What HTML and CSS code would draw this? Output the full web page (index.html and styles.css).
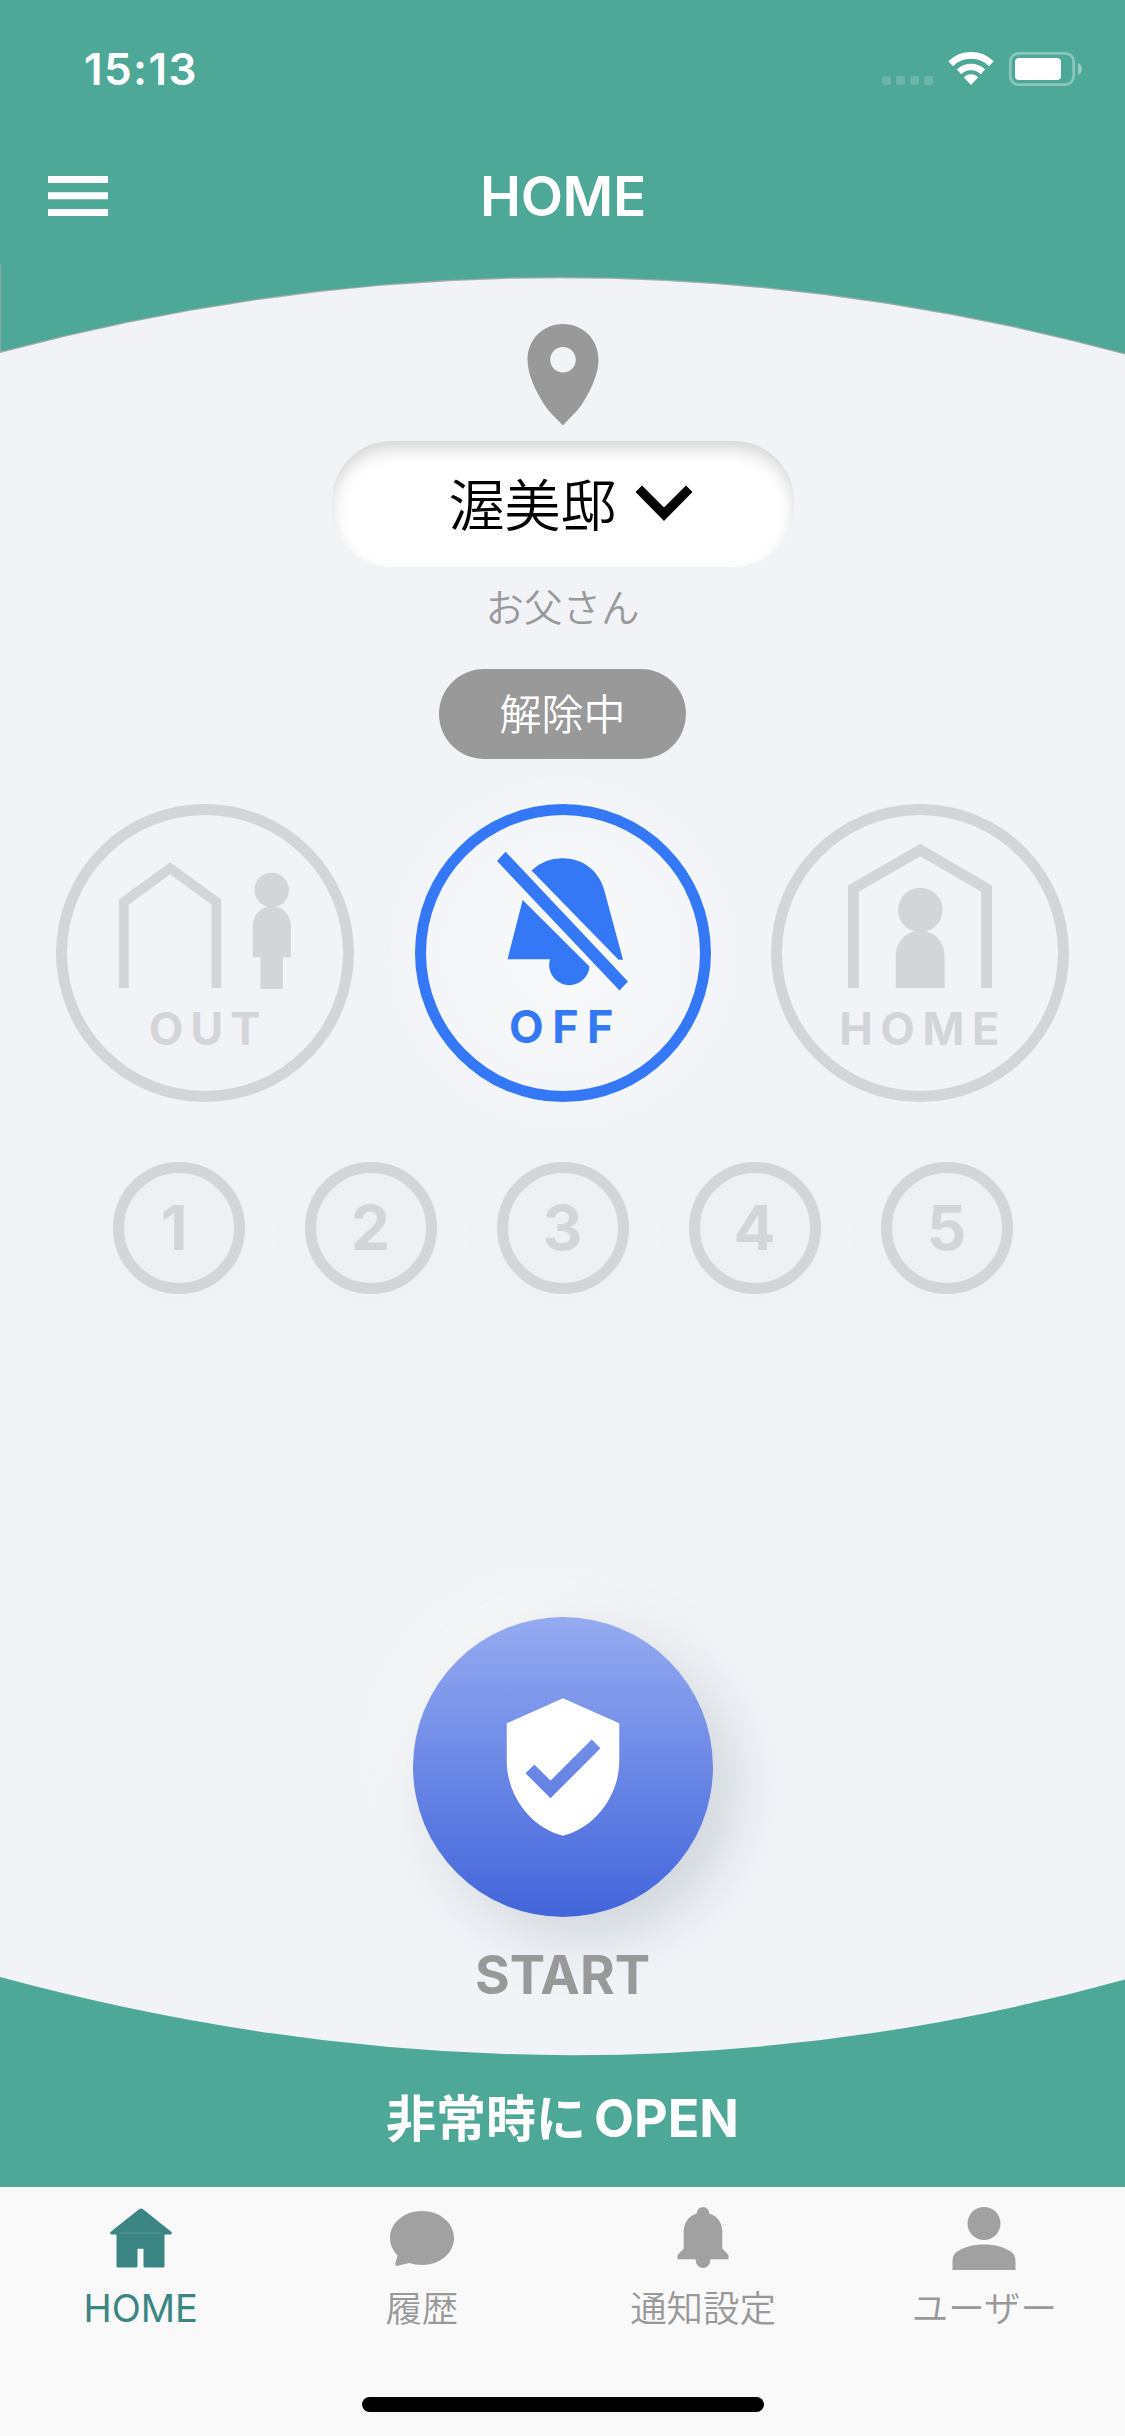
FILE: index.html
```html
<!DOCTYPE html>
<html lang="ja">
<head>
<meta charset="utf-8">
<title>HOME</title>
<link rel="stylesheet" href="styles.css">
</head>
<body>
<div class="screen">
  <header class="header">
    <div class="status">
      <span class="status-time">15:13</span>
      <svg class="status-icons" width="202" height="36" viewBox="881 51 202 36" fill="#fff">
        <g opacity=".17"><rect x="882" y="76" width="9" height="9" rx="2.5"/><rect x="896" y="76" width="9" height="9" rx="2.5"/><rect x="910" y="76" width="9" height="9" rx="2.5"/><rect x="924" y="76" width="9" height="9" rx="2.5"/></g>
        <path d="M971 85l-6.600-7q-.5-.8.3-1.400a10 10 0 0 1 12.600 0q.8.600.3 1.400z"/>
        <path d="M959 71.800a17.500 17.500 0 0 1 24 0" fill="none" stroke="#fff" stroke-width="6.400"/>
        <path d="M950.700 63.700a29 29 0 0 1 40.600 0" fill="none" stroke="#fff" stroke-width="6.800"/>
        <rect x="1010.300" y="53.300" width="63.400" height="31.400" rx="8.500" fill="none" stroke="#fff" stroke-opacity=".35" stroke-width="2.800"/>
        <rect x="1015" y="58" width="46" height="22" rx="4"/>
        <path d="M1078 63q4 1.800 4 6t-4 6z" opacity=".4"/>
      </svg>
    </div>
    <div class="titlebar">
      <svg class="menu" width="60" height="40" viewBox="0 0 60 40"><path d="M0 0h60v7H0zM0 16.300h60v7H0zM0 33h60v7H0z" fill="#fff"/></svg>
      <h1 class="title">HOME</h1>
    </div>
    <svg class="arch" width="1125" height="92" viewBox="0 264 1125 92">
      <path d="M0 264V352.500Q562.500 202 1125 354" fill="none" stroke="#a3aaa8" stroke-width="1.400"/>
      <path d="M0 353Q562.500 202.600 1125 354.500V356H0z" fill="#f1f3f7"/>
    </svg>
  </header>

  <main class="main">
    <svg class="pin" width="72" height="102" viewBox="0 0 72 102"><path fill-rule="evenodd" d="M36 0C16 0 .5 15.500.5 36c0 16 10 34 17 45 5 7.500 12 13.500 18.500 20.500C42 94.500 49.500 88 54.500 81c7-11 17-29 17-45C71.500 15.500 56 0 36 0zm0 23a12.800 12.800 0 1 1 0 25.600 12.800 12.800 0 0 1 0-25.600z" fill="#999"/></svg>
    <button class="place">
      <span class="place-name">渥美邸</span>
      <svg width="58" height="37" viewBox="0 0 58 37"><path d="M7 .5L29 22.500 51 .5 57.500 7 29 36 .5 7z"/></svg>
    </button>
    <p class="member">お父さん</p>
    <div class="state">解除中</div>

    <div class="modes">
      <button class="mode">
        <svg width="298" height="298" viewBox="0 0 298 298">
          <path d="M67.800 184V98L114.100 64.200 160.400 98V184" fill="none" stroke="currentColor" stroke-width="9.800"/>
          <circle cx="215.700" cy="86" r="17.300"/><path d="M196.700 153.300V121.500a19.100 19.100 0 0 1 38.200 0v31.800h-8v31.700h-22.500v-31.700z"/>
        </svg>
        <span class="mode-label label-out">OUT</span>
      </button>
      <button class="mode mode-active">
        <svg width="296" height="298" viewBox="0 0 296 298">
          <path d="M82 57L90.500 47.700 213 177.500 204.500 186.500z"/>
          <path d="M116.500 66.500a44 44 0 0 1 31-12.200c20 0 36 12 41.500 31L208 155.700h-4.500z"/>
          <path d="M107.700 96L174.500 162.500a20.200 20.200 0 1 1-39.500-7.300H92.500z"/>
        </svg>
        <span class="mode-label label-off">OFF</span>
      </button>
      <button class="mode">
        <svg width="298" height="298" viewBox="0 0 298 298">
          <path d="M82.400 184V84.600L149.300 46 215.600 84.600V184" fill="none" stroke="currentColor" stroke-width="10.800"/>
          <circle cx="149.300" cy="106" r="22.300"/><path d="M124.800 184v-33a24.400 24.400 0 0 1 48.800 0v33z"/>
        </svg>
        <span class="mode-label label-home">HOME</span>
      </button>
    </div>

    <div class="numbers">
      <button class="number number-one">1</button><button class="number">2</button><button class="number">3</button><button class="number">4</button><button class="number">5</button>
    </div>

    <button class="start">
      <svg width="150" height="150" viewBox="0 0 24 24"><path fill="#fff" d="M12 1L3 5v6c0 5.550 3.840 10.740 9 12 5.160-1.260 9-6.450 9-12V5l-9-4zm-2 16l-4-4 1.410-1.410L10 14.170l6.590-6.590L18 9l-8 8z"/></svg>
    </button>
    <div class="start-label">START</div>
  </main>

  <footer class="open">
    <svg class="valley" width="1125" height="80" viewBox="0 1976 1125 80"><path d="M0 1976V1977Q574 2132 1125 1979.500V1976z" fill="#f1f3f7"/></svg>
    <div class="open-text"><span>非常時に</span><span class="open-en">OPEN</span></div>
  </footer>

  <nav class="tabs">
    <a class="tab tab-active">
      <svg width="66" height="66" viewBox="0 -1.500 66 66" fill="currentColor"><path d="M33 2q1 0 2 .8L63.500 25.500q1 2-1 2.500H3.500q-2-.5-1-2.500L31 2.800Q32 2 33 2z"/><path d="M8.500 27h48v32.500q0 1.500-1.500 1.500H37q-1.500 0-1.500-1.500V42.300h-6v17.200q0 1.500-1.500 1.500H10q-1.500 0-1.500-1.500z"/><path d="M11 26.500h43" stroke="#62a09d" stroke-width=".8"/></svg>
      <span class="tab-en">HOME</span>
    </a>
    <a class="tab">
      <svg width="66" height="66" viewBox="0 0 66 66" fill="currentColor"><path d="M33 6C51 6 65 18 65 33S51 60 33 60q-7 0-13-2L8 61q-2 0-1.700-2L8.500 50.500Q1 43 1 33C1 18 15 6 33 6z"/></svg>
      <span>履歴</span>
    </a>
    <a class="tab">
      <svg width="66" height="66" viewBox="0 0 66 66" fill="currentColor"><path d="M33 2a6.300 6.300 0 0 1 6.300 6.500C48 11 52.300 18.500 52.300 27v16.500L58.500 50v4.300H40.500a7.500 8.700 0 0 1-15 0H7.500V50l6.200-6.500V27c0-8.500 4.300-16 13-18.500A6.300 6.300 0 0 1 33 2z"/></svg>
      <span>通知設定</span>
    </a>
    <a class="tab">
      <svg width="66" height="66" viewBox="0 0 66 66" fill="currentColor"><circle cx="33" cy="18.500" r="16.500"/><path d="M1.500 65V56Q1.500 49 7 46C14.500 41.500 23 39.500 33 39.500S51.500 41.500 59 46Q64.500 49 64.500 56V65z"/></svg>
      <span>ユーザー</span>
    </a>
    <div class="home-indicator"></div>
  </nav>
</div>
</body>
</html>
```

FILE: styles.css
```css
* { box-sizing: border-box; }

body {
  margin: 0;
  font-family: "Inter", "Noto Sans CJK JP", sans-serif;
  background: #f1f3f7;
}

h1, p { margin: 0; font-weight: inherit; }
svg { display: block; flex: none; }

button {
  padding: 0;
  border: 0;
  background: none;
  font: inherit;
  color: inherit;
}

.screen {
  width: 1125px;
  height: 2436px;
  display: flex;
  flex-direction: column;
  overflow: hidden;
}

/* Header */
.header {
  height: 356px;
  flex: none;
  display: flex;
  flex-direction: column;
  background: #4ea897;
  color: #fff;
}

.status {
  height: 130px;
  padding: 51px 42px 0 84px;
  display: flex;
  justify-content: space-between;
}

.status-time {
  height: 36px;
  line-height: 36px;
  font-size: 44px;
  font-weight: 600;
  letter-spacing: 1.4px;
}

.titlebar {
  height: 134px;
  padding: 0 48px 2px;
  display: grid;
  grid-template-columns: 60px 1fr 60px;
  align-items: center;
}

.title {
  padding-left: 1px;
  line-height: 60px;
  font-size: 55px;
  font-weight: 580;
  letter-spacing: -.3px;
  text-align: center;
}

/* Main: sits above the footer so the START label can overlap its curve */
.main {
  position: relative;
  z-index: 1;
  height: 1620px;
  flex: none;
  display: flex;
  flex-direction: column;
  align-items: center;
}

.main > * { flex-shrink: 0; }

.pin { margin-top: -32px; }

.place {
  width: 462px;
  height: 126px;
  margin-top: 15px;
  padding: 0 101px 0 117px;
  display: flex;
  align-items: center;
  justify-content: space-between;
  border-radius: 60px;
  background: #fff;
  box-shadow: inset 0 9px 18px -2px rgba(0, 0, 0, .18);
  color: #000;
}

.place svg { margin-top: -1px; }

.place-name {
  padding-top: 3px;
  font-size: 56px;
  font-weight: 350;
  line-height: 80px;
}

.member {
  margin-top: 16px;
  line-height: 50px;
  font-size: 38.5px;
  font-weight: 350;
  color: #999;
}

.state {
  width: 247px;
  height: 90px;
  margin-top: 36px;
  padding-top: 1px;
  border-radius: 45px;
  background: #999;
  color: #fff;
  font-size: 42px;
  font-weight: 350;
  line-height: 90px;
  text-align: center;
}

.modes {
  width: 1013px;
  margin-top: 45px;
  display: flex;
  justify-content: space-between;
  color: #d4d5d8;
}

.mode {
  width: 298px;
  height: 298px;
  display: grid;
  border-radius: 50%;
  box-shadow: inset 0 0 0 11px currentColor;
}

.mode svg { grid-area: 1 / 1; fill: currentColor; }

.mode-active {
  width: 296px;
  color: #3478f6;
  background: radial-gradient(circle, #f8f9fa, #f3f5f8 70%);
  box-shadow: inset 0 0 0 11px currentColor, 0 0 50px rgba(250, 251, 251, .6);
}

.mode-label {
  grid-area: 1 / 1;
  align-self: start;
  margin-top: 200px;
  line-height: 50px;
  font-size: 45px;
  font-weight: 650;
  letter-spacing: 7px;
  text-align: center;
}

.label-out { padding-left: 6px; }
.label-off { margin-top: 198px; padding-left: 6px; letter-spacing: 8.5px; }
.label-home { padding-left: 6px; letter-spacing: 7.5px; }

.numbers {
  margin-top: 60px;
  display: flex;
  gap: 60px;
}

.number {
  width: 132px;
  height: 132px;
  border: 11px solid #d4d5d8;
  border-radius: 50%;
  background: #eff0f4;
  box-shadow: 0 8px 50px rgba(228, 228, 231, .15);
  color: #d4d5d8;
  font-size: 62px;
  font-weight: 700;
  line-height: 110px;
  text-align: center;
}

.number-one { padding-right: 9px; }

.start {
  width: 300px;
  height: 300px;
  margin-top: 323px;
  display: grid;
  place-items: center;
  border-radius: 50%;
  background: linear-gradient(#95abf1, #6b88e6 50%, #4265da);
  box-shadow: 20px 20px 55px rgba(160, 172, 184, .42), -16px -16px 60px rgba(250, 251, 248, .75);
}

.start-label {
  margin-top: 28px;
  line-height: 60px;
  font-size: 53px;
  font-weight: 680;
  color: #999;
}

/* Emergency footer */
.open {
  height: 211px;
  flex: none;
  background: #4ea897;
  color: #fff;
}

.open-text {
  height: 60px;
  margin-top: 33px;
  display: flex;
  justify-content: center;
  gap: 8px;
  line-height: 60px;
  font-size: 50px;
  font-weight: 700;
}

.open-en { font-size: 52px; }

/* Tab bar */
.tabs {
  height: 249px;
  flex: none;
  padding-top: 18px;
  display: grid;
  grid-template-columns: repeat(4, 1fr);
  grid-template-rows: 192px 15px;
  justify-items: center;
  background: #f9f9f9;
  color: #a1a1a1;
}

.tab {
  display: flex;
  flex-direction: column;
  align-items: center;
  font-size: 36.5px;
  font-weight: 350;
  line-height: 48px;
}

.tab span { margin-top: 14px; color: #999; }

.tab-active .tab-en { margin-top: 13px; color: #3b8584; font-size: 38px; font-weight: 400; }
.tab-active { color: #3b8584; }

.home-indicator {
  grid-column: 1 / -1;
  width: 402px;
  height: 15px;
  border-radius: 8px;
  background: #000;
}
```
